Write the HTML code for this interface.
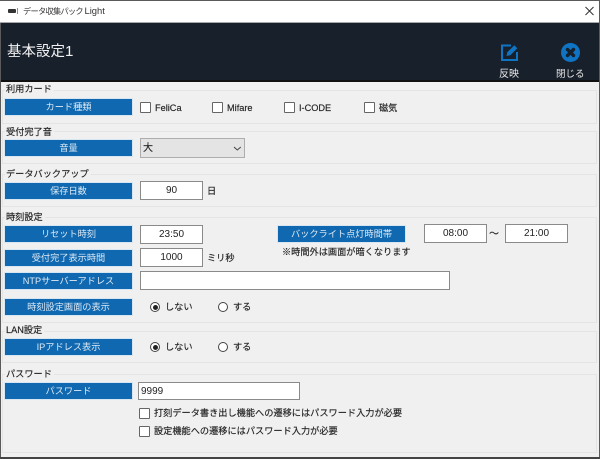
<!DOCTYPE html>
<html lang="ja"><head><meta charset="utf-8">
<style>
html,body{margin:0;padding:0}
body{width:600px;height:459px;overflow:hidden;position:relative;background:#f0f0f0;font-family:"Liberation Sans","Noto Sans CJK JP",sans-serif;font-size:9.2px;color:#222;filter:blur(.3px)}
div{position:absolute;box-sizing:border-box;white-space:nowrap}
.g{left:2px;width:595px;border:1.5px solid #e4e4e2}
.gl{left:5px;background:#f0f0f0;padding:0 2px 0 1px;font-size:9.2px;line-height:12px;height:12px;-webkit-text-stroke:.15px #222}
.b{left:4px;width:129px;height:18px;background:#0f68b0;border:1px solid #d8e6f2;color:#dfeaf5;text-align:center;line-height:17px;font-size:9.2px}
.i{height:19px;background:#fff;border:1px solid #8a8a8a;border-right-width:1.5px;border-bottom-width:1.5px;text-align:center;line-height:18px;font-size:10px;color:#222}
.c{width:11px;height:11px;background:#fff;border:1.3px solid #666;border-radius:1px}
.t{line-height:12px;height:12px;font-size:9.2px;-webkit-text-stroke:.15px #222}
.r{width:10px;height:10px;background:#fff;border:1px solid #444;border-radius:50%}
.r.on::after{content:"";position:absolute;left:1.5px;top:1.5px;width:5px;height:5px;background:#222;border-radius:50%}
</style></head><body>
<div style="left:0;top:0;width:600px;height:1px;background:#5a5a5a"></div>
<div style="left:0;top:1px;width:600px;height:22px;background:#fff"></div>
<div style="left:8px;top:9px;width:8px;height:4px;background:#333;border-radius:1px"></div>
<div style="left:17px;top:8px;width:1px;height:6px;background:#e0609a"></div>
<div class="t" style="left:23px;top:5px;color:#333;font-size:8.2px;letter-spacing:-.7px;-webkit-text-stroke:0">データ収集パック <span style="font-size:9.4px;letter-spacing:0">Light</span></div>
<svg style="position:absolute;left:585px;top:6px" width="10" height="10" viewBox="0 0 10 10"><path d="M.5 1L8.5 9M8.5 1L.5 9" stroke="#333" stroke-width="1" fill="none"/></svg>
<div style="left:0;top:22px;width:600px;height:59px;background:#18202b;border-top:1px solid #a8a8a8"></div>
<div style="left:7px;top:43px;font-size:14.5px;line-height:18px;color:#f2f2f2;height:18px">基本設定<span style="font-size:15px">1</span></div>
<svg style="position:absolute;left:500px;top:43px" width="20" height="19" viewBox="0 0 20 19"><path d="M11 2.500H2v14.500h15V9" stroke="#0f74c4" stroke-width="2" fill="none"/><path d="M6.500 13l.8-3.800 7-7 3 3-7 7z" fill="#0f74c4"/></svg>
<div class="t" style="left:499px;top:69px;color:#e8e8e8;font-size:10px;-webkit-text-stroke:0">反映</div>
<svg style="position:absolute;left:561px;top:43px" width="19" height="19" viewBox="0 0 19 19"><circle cx="9.500" cy="9.500" r="9.500" fill="#0f74c4"/><path d="M6.500 6.500l6 6M12.500 6.500l-6 6" stroke="#18202b" stroke-width="3.400" stroke-linecap="round" fill="none"/></svg>
<div class="t" style="left:556px;top:69px;color:#e8e8e8;font-size:9.500px;-webkit-text-stroke:0">閉じる</div>
<div style="left:0;top:80px;width:600px;height:2px;background:#111"></div>
<div style="left:0;top:23px;width:1px;height:436px;background:#5a5a5a"></div>
<div style="left:599px;top:0;width:1px;height:459px;background:#5a5a5a"></div>
<div style="left:0;top:457px;width:600px;height:2px;background:#444"></div>

<div class="g" style="top:90px;height:34px"></div><div class="gl" style="top:83px">利用カード</div>
<div class="b" style="top:98px">カード種類</div>
<div class="c" style="left:140px;top:102px"></div><div class="t" style="left:155px;top:102px">FeliCa</div>
<div class="c" style="left:212px;top:102px"></div><div class="t" style="left:227px;top:102px">Mifare</div>
<div class="c" style="left:284px;top:102px"></div><div class="t" style="left:299px;top:102px">I-CODE</div>
<div class="c" style="left:364px;top:102px"></div><div class="t" style="left:379px;top:102px">磁気</div>

<div class="g" style="top:131px;height:33px"></div><div class="gl" style="top:126px">受付完了音</div>
<div class="b" style="top:139px">音量</div>
<div style="left:140px;top:138px;width:105px;height:20px;background:#e4e4e4;border:1px solid #adadad"></div>
<div class="t" style="left:143px;top:143px;font-size:10px">大</div>
<svg style="position:absolute;left:233px;top:146px" width="9" height="5" viewBox="0 0 9 5"><path d="M1 1l3.300 3L7.800 1" stroke="#444" fill="none"/></svg>

<div class="g" style="top:174px;height:33px"></div><div class="gl" style="top:168px">データバックアップ</div>
<div class="b" style="top:182px">保存日数</div>
<div class="i" style="left:140px;top:181px;width:63px">90</div>
<div class="t" style="left:207px;top:185px">日</div>

<div class="g" style="top:217px;height:106px"></div><div class="gl" style="top:211px">時刻設定</div>
<div class="b" style="top:225px">リセット時刻</div>
<div class="i" style="left:140px;top:225px;width:63px">23:50</div>
<div class="b" style="top:249px">受付完了表示時間</div>
<div class="i" style="left:140px;top:248px;width:63px">1000</div>
<div class="t" style="left:207px;top:252px">ミリ秒</div>
<div class="b" style="top:272px">NTPサーバーアドレス</div>
<div class="i" style="left:140px;top:271px;width:310px"></div>
<div class="b" style="left:277px;top:225px;width:129px;">バックライト点灯時間帯</div>
<div class="t" style="left:282px;top:246px">※時間外は画面が暗くなります</div>
<div class="i" style="left:424px;top:224px;width:63px">08:00</div>
<div class="t" style="left:489px;top:229px;font-size:10px">～</div>
<div class="i" style="left:505px;top:224px;width:63px">21:00</div>
<div class="b" style="top:298px">時刻設定画面の表示</div>
<div class="r on" style="left:150px;top:302px"></div><div class="t" style="left:165px;top:301px">しない</div>
<div class="r" style="left:218px;top:302px"></div><div class="t" style="left:233px;top:301px">する</div>

<div class="g" style="top:331px;height:32px"></div><div class="gl" style="top:324px">LAN設定</div>
<div class="b" style="top:338px">IPアドレス表示</div>
<div class="r on" style="left:150px;top:342px"></div><div class="t" style="left:165px;top:341px">しない</div>
<div class="r" style="left:218px;top:342px"></div><div class="t" style="left:233px;top:341px">する</div>

<div class="g" style="top:374px;height:79px"></div><div class="gl" style="top:368px">パスワード</div>
<div class="b" style="top:382px">パスワード</div>
<div class="i" style="left:138px;top:382px;width:162px;height:18px;line-height:17px;text-align:left;padding-left:2px">9999</div>
<div class="c" style="left:139px;top:408px"></div><div class="t" style="left:154px;top:407px">打刻データ書き出し機能への遷移にはパスワード入力が必要</div>
<div class="c" style="left:139px;top:426px"></div><div class="t" style="left:154px;top:425px">設定機能への遷移にはパスワード入力が必要</div>
</body></html>
